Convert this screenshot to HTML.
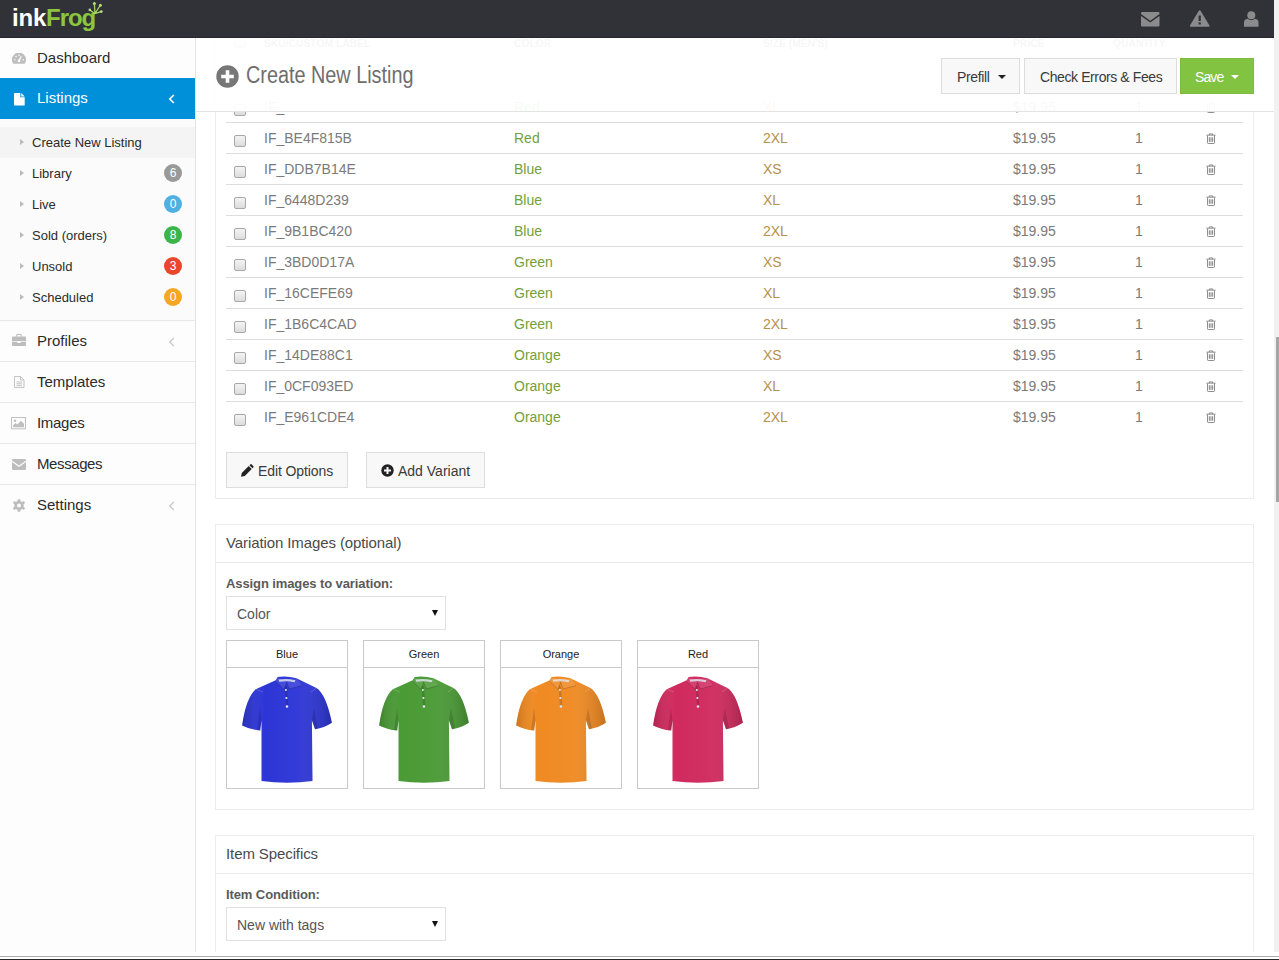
<!DOCTYPE html>
<html lang="en">
<head>
<meta charset="utf-8">
<title>inkFrog - Create New Listing</title>
<style>
*{box-sizing:border-box;margin:0;padding:0}
html,body{width:1279px;height:960px;overflow:hidden;background:#fff;font-family:"Liberation Sans",sans-serif;color:#333}
body{position:relative}
.abs{position:absolute}
/* navbar */
#nav{z-index:9;position:absolute;left:0;top:0;width:1274px;height:38px;background:#313238;border-bottom:1px solid #26272c}
#logo{position:absolute;left:12px;top:2px;font-size:24px;font-weight:bold;line-height:32px;letter-spacing:-0.2px;color:#fff;white-space:nowrap}
#logo b{color:#8cc63f;letter-spacing:-1.1px}
/* scrollbar */
#sb{position:absolute;left:1274px;top:0;width:5px;height:952px;background:#f1f1f1}
#sbt{position:absolute;left:1276px;top:337px;width:3px;height:165px;background:#a6a6a6}
/* sidebar */
#side{position:absolute;left:0;top:38px;width:196px;height:914px;background:#fdfdfd;border-right:1px solid #e4e4e4}
.mi{position:relative;height:41px;border-bottom:1px solid #e7e7e7;font-size:15px;line-height:40px;padding-left:37px;color:#2b2b2b;white-space:nowrap}
.mi.act{background:#0090d9;color:#fff;border-bottom-color:#0090d9}
.mi svg.ic{position:absolute}
.mi .chev{position:absolute;left:168px;top:16px}
#sub{background:#fbfbfb;padding:8px 0 7px;border-bottom:1px solid #e7e7e7}
.si{position:relative;height:31px;line-height:31px;font-size:13px;padding-left:32px;color:#2b2b2b}
.si.cur{background:#f4f4f4}
.si:before{content:"";position:absolute;left:20px;top:12px;border-left:4px solid #bbb;border-top:3.5px solid transparent;border-bottom:3.5px solid transparent}
.bd{font-style:normal;position:absolute;left:164px;top:6px;width:18px;height:18px;border-radius:9px;color:#fff;font-size:12px;line-height:18px;text-align:center;letter-spacing:0}
/* header */
#hdr{position:absolute;left:196px;top:38px;width:1078px;height:74px;background:rgba(255,255,255,.95);border-bottom:1px solid #e3e3e3;z-index:5}
#ttl{position:absolute;left:50px;top:21px;font-size:23px;line-height:32px;color:#6e6e6e;font-weight:normal;white-space:nowrap;transform:scaleX(.862);transform-origin:0 50%}
.btn{position:absolute;height:36px;border:1px solid #ddd;background:#f8f8f8;font-size:14px;line-height:36px;color:#3a3a3a;text-align:left;white-space:nowrap}
.car{position:absolute;top:16px;border-top:4px solid #222;border-left:4px solid transparent;border-right:4px solid transparent}
/* panels */
.panel{position:absolute;left:215px;width:1039px;border:1px solid #ececec;background:#fff}
.ph{position:absolute;left:226px;font-size:15px;color:#4a4a4a;letter-spacing:-.1px;white-space:nowrap}
.lbl{position:absolute;left:226px;font-size:13px;font-weight:bold;color:#5a5a5a;letter-spacing:-.1px;white-space:nowrap}
.sel{position:absolute;left:226px;width:220px;height:34px;border:1px solid #e1e1e1;background:#fff;font-size:14px;line-height:34.500px;padding-left:10px;color:#555}
.sel:after{content:"";position:absolute;right:7px;top:13px;border-top:6px solid #111;border-left:3px solid transparent;border-right:3px solid transparent}
/* table */
.row{position:absolute;left:226px;width:1017px;height:31px;border-top:1px solid #ddd;font-size:14px;line-height:30px;color:#7a7a7a}
.row span{position:absolute;top:0;white-space:nowrap}
.cb{position:absolute;left:8px;top:12px;width:12px;height:12px;border:1px solid #a8a8a8;border-radius:2px;background:linear-gradient(#f4f4f4,#dcdcdc)}
.c1{left:38px}.c2{left:288px;color:#74a038}.c3{left:537px;color:#b4914c}.c4{left:787px}.c5{left:909px}
.row svg{position:absolute;left:980px;top:10px}
.th{position:absolute;top:37px;font-size:10.3px;line-height:13px;font-weight:bold;color:#555;white-space:nowrap}
/* cards */
.card{position:absolute;top:640px;width:122px;height:149px;border:1px solid #c9c9c9;background:#fff}
.card .t{height:27px;border-bottom:1px solid #c9c9c9;font-size:11px;line-height:27px;text-align:center;color:#222}
.card svg{position:absolute;left:0;top:27px}
</style>
</head>
<body>
<div id="nav">
  <div id="logo">ink<b>Frog</b></div>
  <svg class="abs" style="left:86px;top:0" width="20" height="18" viewBox="86 0 20 18"><g stroke="#a5d466" stroke-width="1.300" fill="none" stroke-linecap="round"><path d="M95 13.500L94.400 4M95.300 13L100.200 5.500M95.600 13.300L101 11.600M94.500 13.500L90 10"/></g><g fill="#b4dc7c"><circle cx="94.400" cy="3.600" r="1.500"/><circle cx="100.400" cy="5.200" r="1.500"/><circle cx="101.300" cy="11.600" r="1.400"/><circle cx="89.800" cy="9.900" r="1.300"/></g></svg>
  <svg class="abs" style="left:1141px;top:12px" width="19" height="15" viewBox="0 0 19 15"><path fill="#8b8b8d" d="M0 1.300Q0 0 1.300 0H17.200Q18.500 0 18.500 1.300V2.100L9.250 8.700L0 2.100ZM0 4L9.250 10.600L18.500 4V13.200Q18.500 14.500 17.200 14.500H1.300Q0 14.500 0 13.200Z"/></svg>
  <svg class="abs" style="left:1190px;top:10px" width="20" height="17" viewBox="0 0 20 17"><path fill="#8b8b8d" d="M8.700 .9Q9.700 -.6 10.700 .9L19.300 15.300Q20 16.800 18.400 16.800H1Q-.6 16.800 .1 15.300Z"/><path d="M9.700 5.500V11" stroke="#313238" stroke-width="2.200"/><rect x="8.600" y="12.300" width="2.200" height="2.200" fill="#313238"/></svg>
  <svg class="abs" style="left:1244px;top:11px" width="15" height="16" viewBox="0 0 15 16"><circle cx="7.300" cy="4.200" r="4" fill="#8b8b8d"/><path fill="#8b8b8d" d="M0 15.800V11.500Q0 8.300 3.500 7.800Q7.300 10.500 11 7.800Q14.500 8.300 14.500 11.500V15.800Z"/></svg>
</div>
<div id="sb"></div><div id="sbt"></div>

<div id="side">
  <div class="mi" style="height:40px;border-bottom:0">
    <svg class="ic" style="left:12px;top:15px" width="14" height="11" viewBox="0 0 14 11"><path fill="#bdbdbd" d="M1.300 10.700A7 7 0 1 1 12.700 10.700Z"/><path d="M7 7.600L9.300 3.200" stroke="#fdfdfd" stroke-width="1.200" fill="none"/><circle cx="7" cy="7.800" r="1.400" fill="#fdfdfd"/><circle cx="2.800" cy="6.800" r=".8" fill="#fdfdfd"/><circle cx="4" cy="3.600" r=".8" fill="#fdfdfd"/><circle cx="7" cy="2.300" r=".8" fill="#fdfdfd"/><circle cx="11.200" cy="6.800" r=".8" fill="#fdfdfd"/></svg>
    Dashboard</div>
  <div class="mi act">
    <svg class="ic" style="left:14px;top:15px" width="11" height="13" viewBox="0 0 11 13"><path fill="#fff" d="M.6 0H6.300V4.300H10.700V12.400H0V.6Q0 0 .6 0ZM7.200 0L10.700 3.400H7.200Z"/></svg>
    Listings
    <svg class="chev" width="7" height="10" viewBox="0 0 7 10"><path d="M5.800 1L1.800 5L5.800 9" stroke="#fff" stroke-width="1.600" fill="none"/></svg></div>
  <div id="sub">
    <div class="si cur">Create New Listing</div>
    <div class="si">Library<i class="bd" style="background:#999">6</i></div>
    <div class="si">Live<i class="bd" style="background:#4fb0e2">0</i></div>
    <div class="si">Sold (orders)<i class="bd" style="background:#3bb54a">8</i></div>
    <div class="si">Unsold<i class="bd" style="background:#e8472b">3</i></div>
    <div class="si">Scheduled<i class="bd" style="background:#f5a623">0</i></div>
  </div>
  <div class="mi">
    <svg class="ic" style="left:12px;top:13px" width="14" height="12" viewBox="0 0 14 12"><g fill="#bdbdbd"><path d="M4.200 2.600V.9Q4.200 0 5.100 0H8.900Q9.800 0 9.800 .9V2.600H8.700V1.100H5.300V2.600Z"/><path d="M.9 2.400H13.100Q14 2.400 14 3.300V6.900H0V3.300Q0 2.400 .9 2.400Z"/><path d="M0 7.800H5.300V9H8.700V7.800H14V11.100Q14 12 13.100 12H.9Q0 12 0 11.100Z"/></g></svg>
    Profiles
    <svg class="chev" width="7" height="10" viewBox="0 0 7 10"><path d="M5.800 1L1.800 5L5.800 9" stroke="#ccc" stroke-width="1.400" fill="none"/></svg></div>
  <div class="mi">
    <svg class="ic" style="left:14px;top:14px" width="11" height="12" viewBox="0 0 11 12"><g fill="none" stroke="#c4c4c4" stroke-width="1"><path d="M.5 .5H6.500L10 4V11.500H.5Z"/><path d="M6.500 .5V4H10M2.500 6H8M2.500 7.800H8M2.500 9.600H8"/></g></svg>
    Templates</div>
  <div class="mi">
    <svg class="ic" style="left:11px;top:14px" width="15" height="13" viewBox="0 0 15 13"><rect x=".5" y=".5" width="14" height="11.300" fill="none" stroke="#c0c0c0" stroke-width="1"/><circle cx="4" cy="3.700" r="1.300" fill="#c0c0c0"/><path fill="#c0c0c0" d="M2 10.300V8.300L4.500 6L6.300 7.600L10 3.700L13 6.800V10.300Z"/></svg>
    <span style="letter-spacing:-.3px">Images</span></div>
  <div class="mi">
    <svg class="ic" style="left:12px;top:15px" width="14" height="11" viewBox="0 0 14 11"><path fill="#bdbdbd" d="M0 1Q0 0 1 0H13Q14 0 14 1V1.600L7 6.500L0 1.600ZM0 3L7 7.900L14 3V10Q14 11 13 11H1Q0 11 0 10Z"/></svg>
    <span style="letter-spacing:-.4px">Messages</span></div>
  <div class="mi" style="border-bottom:0">
    <svg class="ic" style="left:13px;top:14px" width="12" height="13" viewBox="-6 -6.500 12 13"><g fill="#bdbdbd"><path d="M-1.200-6.200H1.200L1.600-4.300L3.200-3.500L4.900-4.500L6.100-2.500L4.600-1.200V1.200L6.100 2.500L4.900 4.500L3.200 3.500L1.600 4.300L1.200 6.200H-1.200L-1.600 4.300L-3.200 3.500L-4.900 4.500L-6.100 2.500L-4.600 1.200V-1.200L-6.100-2.500L-4.900-4.500L-3.200-3.500L-1.600-4.300Z"/></g><circle r="2" fill="#fdfdfd"/></svg>
    Settings
    <svg class="chev" width="7" height="10" viewBox="0 0 7 10"><path d="M5.800 1L1.800 5L5.800 9" stroke="#ccc" stroke-width="1.400" fill="none"/></svg></div>
</div>

<!-- panels -->
<div class="panel" style="top:30px;height:469px"></div>
<div class="panel" style="top:524px;height:286px"></div>
<div class="panel" style="top:835px;height:140px"></div>

<!-- table -->
<div class="th" style="left:264px">SKU/CUSTOM LABEL</div><div class="th" style="left:514px">COLOR</div><div class="th" style="left:763px">SIZE (MEN'S)</div><div class="th" style="left:1013px">PRICE</div><div class="th" style="left:1113px">QUANTITY</div><i class="cb" style="left:234px;top:36px"></i>
<svg width="0" height="0" style="position:absolute"><defs>
<g id="trash" fill="none" stroke="#777" stroke-width="1"><path d="M0.5 2.5h11M4 2.5v-1.5h4v1.5M1.8 3v8.6q0 .9.9.9h6.6q.9 0 .9-.9v-8.600"/><path d="M4 5v5.500M6 5v5.500M8 5v5.500" stroke-width="1.100"/></g>
<linearGradient id="pg" x1="0" y1="0" x2="1" y2="0"><stop offset="0" stop-color="#000" stop-opacity=".16"/><stop offset=".25" stop-color="#fff" stop-opacity="0"/><stop offset=".6" stop-color="#fff" stop-opacity=".03"/><stop offset="1" stop-color="#000" stop-opacity=".18"/></linearGradient>
<g id="polo"><path d="M50.600 9Q60 7.500 69.400 10.300L89.400 20Q99 26 104.900 54.800Q97 60 88 61.300L84.900 52.200L85.500 112.900Q60 116.500 34.500 112.900L34.500 52.200L33.200 62.500Q23 61.500 15.100 57.400Q19 30 28.700 21.200L48.700 12.200Z"/><path fill="url(#pg)" d="M50.600 9Q60 7.500 69.400 10.300L89.400 20Q99 26 104.900 54.800Q97 60 88 61.300L84.900 52.200L85.500 112.900Q60 116.500 34.500 112.900L34.500 52.200L33.200 62.500Q23 61.500 15.100 57.400Q19 30 28.700 21.200L48.700 12.200Z"/><path d="M51.500 11.500Q60 10 68.500 12.200L67.500 14.200Q60 12.600 52.300 13.800Z" fill="#dfe3ee" opacity=".85"/><path d="M50.600 9.200L48.300 13L57.200 21.500L59.600 14.200ZM69.400 10.300L75 17.500L62.200 21L59.600 14.200Z" fill="#fff" opacity=".10"/><path d="M48.300 13L57.200 21.500L59.600 14.200M75 17.500L62.200 21L59.600 14.200" stroke="#000" stroke-opacity=".22" stroke-width=".8" fill="none"/><path d="M28.700 21.200L36 24M89.400 20L84 24" stroke="#fff" stroke-opacity=".18" stroke-width="1" fill="none"/><path d="M58.700 18L60.300 40" stroke="#000" stroke-opacity=".15" stroke-width="2.400" fill="none"/><circle cx="58.900" cy="22" r="1" fill="#e6e8f4"/><circle cx="59.400" cy="30" r="1.100" fill="#e6e8f4"/><circle cx="60" cy="38.500" r="1.300" fill="#e6e8f4"/><path d="M34.500 52.200L33.200 62.500L30 62.200L33 40ZM84.900 52.200L88 61.300L91 60.800L87 40Z" fill="#000" opacity=".14"/></g>
</defs></svg>
<div class="row" style="top:91px"><i class="cb"></i><span class="c1">IF_</span><span class="c2">Red</span><span class="c3">XL</span><span class="c4">$19.95</span><span class="c5">1</span><svg width="10" height="11" viewBox="0 0 12 13"><use href="#trash"/></svg></div>
<div class="row" style="top:122px"><i class="cb"></i><span class="c1">IF_BE4F815B</span><span class="c2">Red</span><span class="c3">2XL</span><span class="c4">$19.95</span><span class="c5">1</span><svg width="10" height="11" viewBox="0 0 12 13"><use href="#trash"/></svg></div>
<div class="row" style="top:153px"><i class="cb"></i><span class="c1">IF_DDB7B14E</span><span class="c2">Blue</span><span class="c3">XS</span><span class="c4">$19.95</span><span class="c5">1</span><svg width="10" height="11" viewBox="0 0 12 13"><use href="#trash"/></svg></div>
<div class="row" style="top:184px"><i class="cb"></i><span class="c1">IF_6448D239</span><span class="c2">Blue</span><span class="c3">XL</span><span class="c4">$19.95</span><span class="c5">1</span><svg width="10" height="11" viewBox="0 0 12 13"><use href="#trash"/></svg></div>
<div class="row" style="top:215px"><i class="cb"></i><span class="c1">IF_9B1BC420</span><span class="c2">Blue</span><span class="c3">2XL</span><span class="c4">$19.95</span><span class="c5">1</span><svg width="10" height="11" viewBox="0 0 12 13"><use href="#trash"/></svg></div>
<div class="row" style="top:246px"><i class="cb"></i><span class="c1">IF_3BD0D17A</span><span class="c2">Green</span><span class="c3">XS</span><span class="c4">$19.95</span><span class="c5">1</span><svg width="10" height="11" viewBox="0 0 12 13"><use href="#trash"/></svg></div>
<div class="row" style="top:277px"><i class="cb"></i><span class="c1">IF_16CEFE69</span><span class="c2">Green</span><span class="c3">XL</span><span class="c4">$19.95</span><span class="c5">1</span><svg width="10" height="11" viewBox="0 0 12 13"><use href="#trash"/></svg></div>
<div class="row" style="top:308px"><i class="cb"></i><span class="c1">IF_1B6C4CAD</span><span class="c2">Green</span><span class="c3">2XL</span><span class="c4">$19.95</span><span class="c5">1</span><svg width="10" height="11" viewBox="0 0 12 13"><use href="#trash"/></svg></div>
<div class="row" style="top:339px"><i class="cb"></i><span class="c1">IF_14DE88C1</span><span class="c2">Orange</span><span class="c3">XS</span><span class="c4">$19.95</span><span class="c5">1</span><svg width="10" height="11" viewBox="0 0 12 13"><use href="#trash"/></svg></div>
<div class="row" style="top:370px"><i class="cb"></i><span class="c1">IF_0CF093ED</span><span class="c2">Orange</span><span class="c3">XL</span><span class="c4">$19.95</span><span class="c5">1</span><svg width="10" height="11" viewBox="0 0 12 13"><use href="#trash"/></svg></div>
<div class="row" style="top:401px"><i class="cb"></i><span class="c1">IF_E961CDE4</span><span class="c2">Orange</span><span class="c3">2XL</span><span class="c4">$19.95</span><span class="c5">1</span><svg width="10" height="11" viewBox="0 0 12 13"><use href="#trash"/></svg></div>


<!-- buttons under table -->
<div class="btn" style="left:226px;top:452px;width:122px;padding-left:31px;letter-spacing:-.1px"><svg class="abs" style="left:14px;top:11px" width="13" height="13" viewBox="0 0 13 13"><path fill="#222" d="M0 12.700L.8 9L7.700 2.100L10.700 5.100L3.800 12ZM8.500 1.300L9.500 .3Q10 -.1 10.500 .3L12.400 2.200Q12.900 2.700 12.400 3.200L11.400 4.300Z"/></svg>Edit Options</div>
<div class="btn" style="left:366px;top:452px;width:119px;padding-left:31px"><svg class="abs" style="left:14px;top:11px" width="13" height="13" viewBox="0 0 13 13"><circle cx="6.500" cy="6.500" r="6.200" fill="#222"/><path d="M6.500 3V10M3 6.500H10" stroke="#f8f8f8" stroke-width="2"/></svg>Add Variant</div>

<!-- variation images -->
<div class="ph" style="top:534px">Variation Images (optional)</div>
<div class="abs" style="left:216px;top:562px;width:1037px;height:1px;background:#ececec"></div>
<div class="lbl" style="top:576px">Assign images to variation:</div>
<div class="sel" style="top:596px">Color</div>
<div class="card" style="left:226px"><div class="t">Blue</div><svg width="120" height="120" viewBox="0 0 120 120"><use href="#polo" fill="#2d35d6"/></svg></div>
<div class="card" style="left:363px"><div class="t">Green</div><svg width="120" height="120" viewBox="0 0 120 120"><use href="#polo" fill="#4a9a35"/></svg></div>
<div class="card" style="left:500px"><div class="t">Orange</div><svg width="120" height="120" viewBox="0 0 120 120"><use href="#polo" fill="#f08a22"/></svg></div>
<div class="card" style="left:637px"><div class="t">Red</div><svg width="120" height="120" viewBox="0 0 120 120"><use href="#polo" fill="#d02a5e"/></svg></div>

<!-- item specifics -->
<div class="ph" style="top:845px">Item Specifics</div>
<div class="abs" style="left:216px;top:873px;width:1037px;height:1px;background:#ececec"></div>
<div class="lbl" style="top:887px">Item Condition:</div>
<div class="sel" style="top:907px">New with tags</div>

<div id="hdr">
  <svg class="abs" style="left:20px;top:27px" width="23" height="23" viewBox="0 0 23 23"><circle cx="11.500" cy="11.500" r="11.200" fill="#777"/><path d="M11.500 5.200V17.800M5.200 11.500H17.800" stroke="#fff" stroke-width="3.600"/></svg>
  <h1 id="ttl">Create New Listing</h1>
  <div class="btn" style="left:745px;top:20px;width:79px;padding-left:15px;letter-spacing:-.35px">Prefill<i class="car" style="left:56px"></i></div>
  <div class="btn" style="left:828px;top:20px;width:153px;padding-left:15px;letter-spacing:-.4px">Check Errors &amp; Fees</div>
  <div class="btn" style="left:984px;top:20px;width:74px;padding-left:14px;background:#82c341;border-color:#7cbc3b;color:#fff;letter-spacing:-.9px">Save<i class="car" style="left:50px;border-top-color:#fff"></i></div>
</div>

<div id="bottom" class="abs" style="left:0;top:952px;width:1279px;height:8px;background:#fff;z-index:20"><div class="abs" style="left:0;top:4px;width:1279px;height:1px;background:#adadad"></div><div class="abs" style="left:0;top:7px;width:1279px;height:1px;background:#2a2a2a"></div></div>
</body>
</html>
